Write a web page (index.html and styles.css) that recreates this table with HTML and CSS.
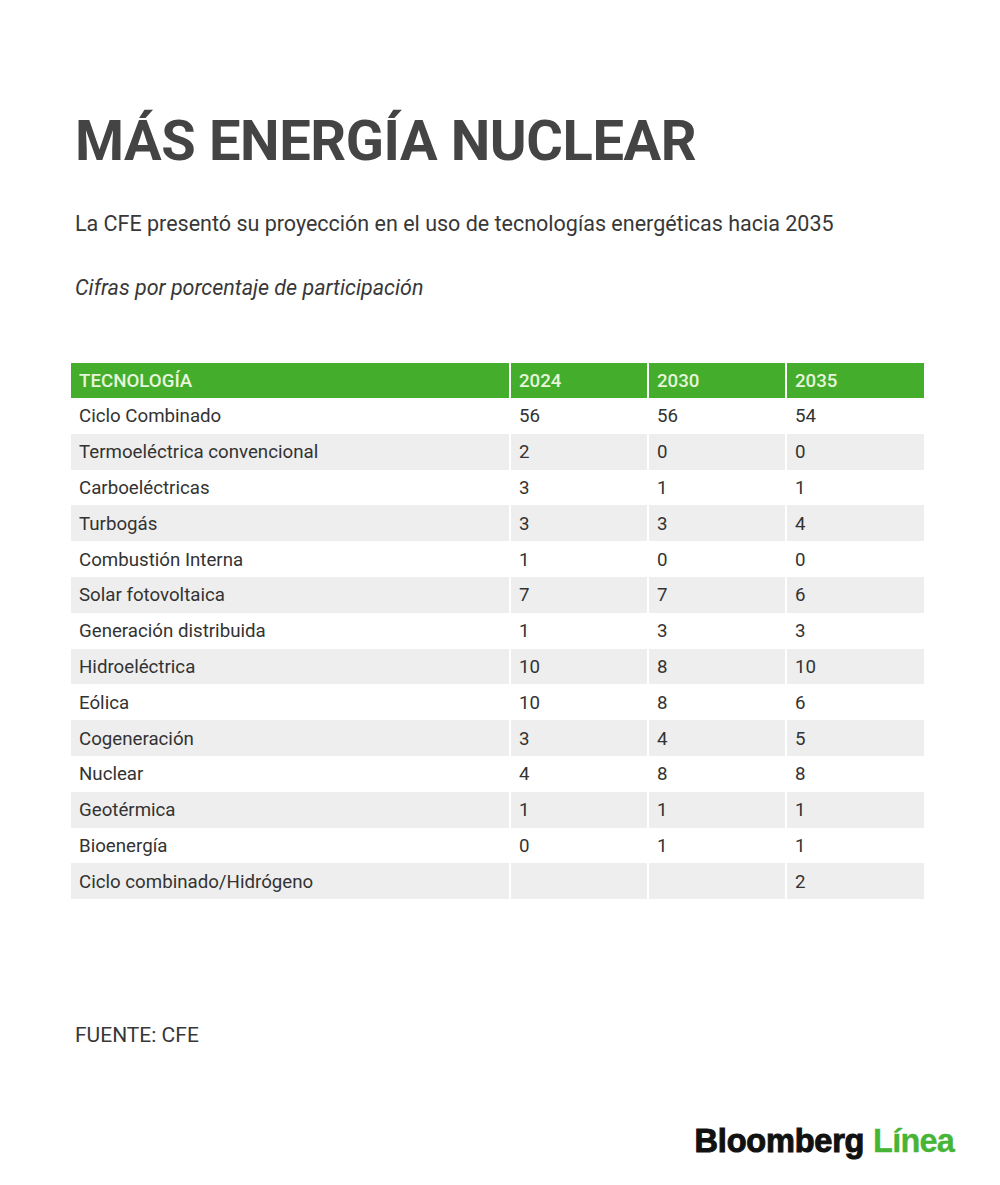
FILE: index.html
```html
<!DOCTYPE html>
<html lang="es">
<head>
<meta charset="utf-8">
<link rel="stylesheet" href="styles.css">
</head>
<body>
<div class="page">
  <h1 class="title">MÁS ENERGÍA NUCLEAR</h1>
  <p class="subtitle">La CFE presentó su proyección en el uso de tecnologías energéticas hacia 2035</p>
  <p class="note">Cifras por porcentaje de participación</p>
  <table class="data">
    <thead>
      <tr><th>TECNOLOGÍA</th><th>2024</th><th>2030</th><th>2035</th></tr>
    </thead>
    <tbody>
      <tr><td>Ciclo Combinado</td><td>56</td><td>56</td><td>54</td></tr>
      <tr><td>Termoeléctrica convencional</td><td>2</td><td>0</td><td>0</td></tr>
      <tr><td>Carboeléctricas</td><td>3</td><td>1</td><td>1</td></tr>
      <tr><td>Turbogás</td><td>3</td><td>3</td><td>4</td></tr>
      <tr><td>Combustión Interna</td><td>1</td><td>0</td><td>0</td></tr>
      <tr><td>Solar fotovoltaica</td><td>7</td><td>7</td><td>6</td></tr>
      <tr><td>Generación distribuida</td><td>1</td><td>3</td><td>3</td></tr>
      <tr><td>Hidroeléctrica</td><td>10</td><td>8</td><td>10</td></tr>
      <tr><td>Eólica</td><td>10</td><td>8</td><td>6</td></tr>
      <tr><td>Cogeneración</td><td>3</td><td>4</td><td>5</td></tr>
      <tr><td>Nuclear</td><td>4</td><td>8</td><td>8</td></tr>
      <tr><td>Geotérmica</td><td>1</td><td>1</td><td>1</td></tr>
      <tr><td>Bioenergía</td><td>0</td><td>1</td><td>1</td></tr>
      <tr><td>Ciclo combinado/Hidrógeno</td><td></td><td></td><td>2</td></tr>
    </tbody>
  </table>
  <p class="source">FUENTE: CFE</p>
  <div class="logo"><span class="logo-b">Bloomberg</span> <span class="logo-l">Línea</span></div>
</div>
</body>
</html>
```
FILE: styles.css
```css
html, body {
  margin: 0;
  padding: 0;
  background: #ffffff;
}
body {
  font-family: Roboto, "Liberation Sans", sans-serif;
  color: #333333;
}
.page {
  width: 1000px;
  height: 1185px;
  box-sizing: border-box;
  padding: 0 0 0 71px;
  display: flex;
  flex-direction: column;
  align-items: flex-start;
}
.title {
  margin: 106px 0 0 4px;
  font-size: 56px;
  line-height: 70px;
  font-weight: 700;
  color: #444444;
  letter-spacing: -0.4px;
}
.subtitle {
  margin: 36px 0 0 4px;
  font-size: 21.5px;
  line-height: 24px;
  color: #383838;
}
.note {
  margin: 40px 0 0 4px;
  font-size: 21.5px;
  line-height: 24px;
  font-style: italic;
  color: #383838;
}
.data {
  margin-top: 63px;
  width: 853px;
  border-collapse: collapse;
  font-size: 18.7px;
  color: #333333;
}
.data th, .data td {
  height: 35.8px;
  padding: 1px 8px 0;
  text-align: left;
  border-left: 2px solid #ffffff;
  box-sizing: border-box;
}
.data th:first-child, .data td:first-child {
  border-left: none;
  width: 439px;
}
.data th {
  background: #44ad2b;
  color: #e6f5dc;
  font-weight: 500;
  height: 35px;
}
.data td:not(:first-child), .data th:not(:first-child) {
  width: 138px;
}
.data tbody tr:nth-child(even) td {
  background: #eeeeee;
}
.source {
  margin: 124px 0 0 4px;
  font-size: 21px;
  line-height: 24px;
  color: #383838;
}
.logo {
  align-self: flex-end;
  margin: 74px 46px 0 0;
  font-family: "Liberation Sans", Arial, sans-serif;
  font-size: 32.5px;
  font-weight: 700;
  letter-spacing: -0.2px;
  line-height: 40px;
}
.logo-b {
  color: #111111;
  -webkit-text-stroke: 1px #111111;
}
.logo-l {
  color: #46b535;
  letter-spacing: -0.8px;
  -webkit-text-stroke: 0.3px #46b535;
}
```
